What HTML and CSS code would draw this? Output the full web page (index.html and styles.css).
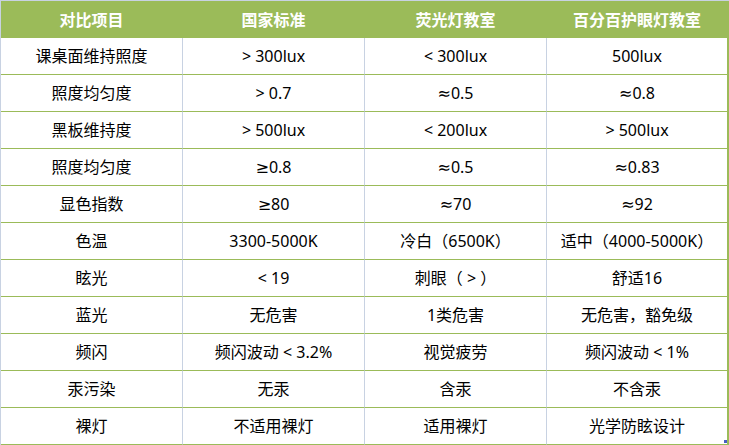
FILE: index.html
```html
<!DOCTYPE html>
<html lang="zh">
<head>
<meta charset="utf-8">
<link rel="stylesheet" href="styles.css">
</head>
<body>
<div class="wrap">
<table class="cmp">
  <colgroup>
    <col class="c1"><col class="c2"><col class="c3"><col class="c4">
  </colgroup>
  <thead>
    <tr><th>对比项目</th><th>国家标准</th><th>荧光灯教室</th><th>百分百护眼灯教室</th></tr>
  </thead>
  <tbody>
    <tr><td>课桌面维持照度</td><td>&gt; 300lux</td><td>&lt; 300lux</td><td>500lux</td></tr>
    <tr><td>照度均匀度</td><td>&gt; 0.7</td><td>≈0.5</td><td>≈0.8</td></tr>
    <tr><td>黑板维持度</td><td>&gt; 500lux</td><td>&lt; 200lux</td><td>&gt; 500lux</td></tr>
    <tr><td>照度均匀度</td><td>≥0.8</td><td>≈0.5</td><td>≈0.83</td></tr>
    <tr><td>显色指数</td><td>≥80</td><td>≈70</td><td>≈92</td></tr>
    <tr><td>色温</td><td>3300-5000K</td><td>冷白（6500K）</td><td>适中（4000-5000K）</td></tr>
    <tr><td>眩光</td><td>&lt; 19</td><td>刺眼（ &gt; ）</td><td>舒适16</td></tr>
    <tr><td>蓝光</td><td>无危害</td><td>1类危害</td><td>无危害，豁免级</td></tr>
    <tr><td>频闪</td><td>频闪波动 &lt; 3.2%</td><td>视觉疲劳</td><td>频闪波动 &lt; 1%</td></tr>
    <tr><td>汞污染</td><td>无汞</td><td>含汞</td><td>不含汞</td></tr>
    <tr><td>裸灯</td><td>不适用裸灯</td><td>适用裸灯</td><td>光学防眩设计</td></tr>
  </tbody>
</table>
<span class="handle"></span>
</div>
</body>
</html>
```

FILE: styles.css
```css
html, body {
  margin: 0;
  padding: 0;
  background: #ffffff;
}
.wrap {
  position: relative;
  width: 729px;
  height: 445px;
  overflow: hidden;
}
.cmp {
  border-collapse: separate;
  border-spacing: 0;
  table-layout: fixed;
  width: 729px;
  border-top: 1px solid #c8d2e2;
  border-left: 1px solid #c8d2e2;
  font-family: "Noto Sans", "DejaVu Sans", "Noto Sans CJK SC", sans-serif;
  font-size: 16px;
  color: #000;
}
.c1, .c2, .c3 { width: 182px; }
.c4 { width: 182px; }
.cmp th, .cmp td {
  padding: 0;
  text-align: center;
  vertical-align: middle;
  white-space: nowrap;
  line-height: 20px;
}
.cmp th {
  height: 37px;
  background: #9bbb59;
  color: #ffffff;
  font-weight: 700;
  border-right: 1px solid #9bbb59;
}
.cmp th:last-child {
  border-right: 2px solid #9bbb59;
}
.cmp td {
  height: 36px;
  border-right: 1px solid #c8d2e2;
  border-bottom: 1px solid #9bbb59;
}
.cmp td:last-child {
  border-right: 2px solid #9bbb59;
}
.handle {
  position: absolute;
  right: 2px;
  bottom: 2px;
  width: 3px;
  height: 3px;
  background: #4a5cc4;
}
```
